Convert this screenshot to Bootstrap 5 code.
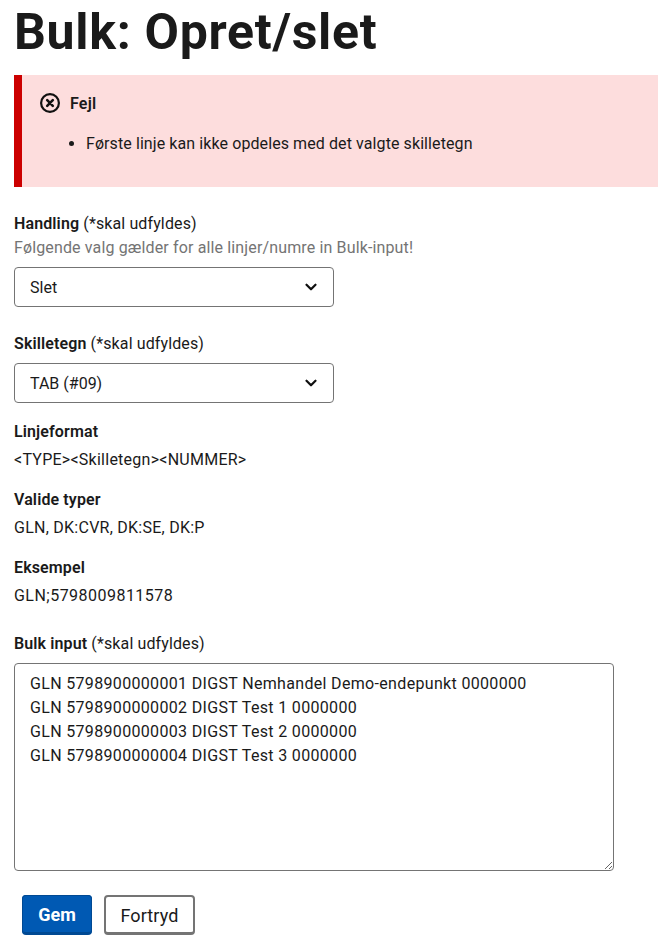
<!DOCTYPE html>
<html lang="da">
<head>
<meta charset="utf-8">
<title>Bulk: Opret/slet</title>
<link href="https://cdn.jsdelivr.net/npm/bootstrap@5.3.0/dist/css/bootstrap.min.css" rel="stylesheet">
<style>
html, body { background: #fff; }
body { font-family: Roboto, "Noto Sans", sans-serif; font-size: 16px; line-height: 24px; color: #1a1a1a; overflow: hidden; }
.page-wrap { padding: 0 0 0 14px; }
.page-title { font-size: 50px; line-height: 64px; font-weight: 700; margin: 0 0 11px; color: #1a1a1a; letter-spacing: .7px; }
.err-box { background: #fddddd; border-left: 8px solid #c00; height: 112px; padding: 16px 18px; margin-bottom: 24px; }
.err-head { font-weight: 600; line-height: 24px; gap: 10px; height: 24px; }
.err-head span { padding-top: 1px; letter-spacing: .2px; }
.err-list { margin: 16px 0 0; padding-left: 46px; letter-spacing: .09px; }
.err-list li { padding-top: 1px; margin-bottom: -1px; }
.field-label { font-weight: 600; display: block; padding-top: 1px; margin: 0 0 -1px; line-height: 24px; letter-spacing: .12px; }
.field-label span { font-weight: 400; }
.field-hint { color: #747474; line-height: 24px; padding-top: 1px; margin-bottom: -1px; letter-spacing: .14px; }
.form-select.sel-box { width: 320px; height: 40px; padding: 8px 16px 6px 15px; font-size: 16px; line-height: 24px; border: 1px solid #747474; border-radius: 4px; color: #1a1a1a; margin-top: 8px;
  background-position: right 14px center; background-size: 16px 12px;
  background-image: url("data:image/svg+xml,%3csvg xmlns='http://www.w3.org/2000/svg' viewBox='0 0 16 16'%3e%3cpath fill='none' stroke='%23111' stroke-linecap='round' stroke-linejoin='round' stroke-width='3' d='m2 5 6 6 6-6'/%3e%3c/svg%3e"); }
.field-gap { margin-bottom: 24px; }
.field-gap-sm { margin-bottom: 16px; }
.info-block { margin-bottom: 16px; height: 52px; }
.info-block p { margin: 4px 0 0; padding-top: 1px; letter-spacing: .25px; }
.info-last { margin-bottom: 24px; }
.info-last p { letter-spacing: .47px; }
.area-box.form-control { width: 600px; height: 208px; margin-top: 8px; padding: 8px 15px; font-size: 16px; line-height: 24px; letter-spacing: .33px; border: 1px solid #747474; border-radius: 4px; color: #1a1a1a; }
.btn-row { padding: 24px 0 0 8px; gap: 12px; }
.btn-row .btn { height: 40px; font-size: 18px; line-height: 24px; border-radius: 4px; }
.btn-gem.btn { background: #0059b3; border: 0; border-bottom: 2px solid #004993; color: #fff; font-weight: 700; width: 70px; padding: 8px 0 6px; box-shadow: inset 0 0 0 1px #004993; }
.btn-fort.btn { background: #fff; border: 2px solid #747474; border-bottom-width: 3px; color: #1a1a1a; width: 91px; padding: 7px 0 5px; letter-spacing: .1px; }
</style>
</head>
<body>
<div class="page-wrap">
  <h1 class="page-title">Bulk: Opret/slet</h1>
  <div class="err-box">
    <div class="err-head d-flex align-items-center">
      <svg width="20" height="20" viewBox="0 0 20 20" aria-hidden="true"><circle cx="10" cy="10" r="8.9" fill="none" stroke="#111" stroke-width="2.2"/><path d="M7.2 7.2l5.6 5.6M12.8 7.2l-5.6 5.6" stroke="#111" stroke-width="2.6" stroke-linecap="round"/></svg>
      <span>Fejl</span>
    </div>
    <ul class="err-list"><li>Første linje kan ikke opdeles med det valgte skilletegn</li></ul>
  </div>
  <form>
    <div class="field-gap">
      <label class="field-label" for="h">Handling <span>(*skal udfyldes)</span></label>
      <div class="field-hint">Følgende valg gælder for alle linjer/numre in Bulk-input!</div>
      <select id="h" class="form-select sel-box"><option>Slet</option></select>
    </div>
    <div class="field-gap-sm">
      <label class="field-label" for="s">Skilletegn <span>(*skal udfyldes)</span></label>
      <select id="s" class="form-select sel-box"><option>TAB (#09)</option></select>
    </div>
    <div class="info-block"><div class="field-label">Linjeformat</div><p>&lt;TYPE&gt;&lt;Skilletegn&gt;&lt;NUMMER&gt;</p></div>
    <div class="info-block"><div class="field-label">Valide typer</div><p>GLN, DK:CVR, DK:SE, DK:P</p></div>
    <div class="info-block info-last"><div class="field-label">Eksempel</div><p>GLN;5798009811578</p></div>
    <label class="field-label" for="b">Bulk input <span>(*skal udfyldes)</span></label>
    <textarea id="b" class="form-control area-box">GLN 5798900000001 DIGST Nemhandel Demo-endepunkt 0000000
GLN 5798900000002 DIGST Test 1 0000000
GLN 5798900000003 DIGST Test 2 0000000
GLN 5798900000004 DIGST Test 3 0000000</textarea>
    <div class="btn-row d-flex">
      <button type="button" class="btn btn-gem">Gem</button>
      <button type="button" class="btn btn-fort">Fortryd</button>
    </div>
  </form>
</div>
<script src="https://cdn.jsdelivr.net/npm/bootstrap@5.3.0/dist/js/bootstrap.bundle.min.js"></script>
</body>
</html>
